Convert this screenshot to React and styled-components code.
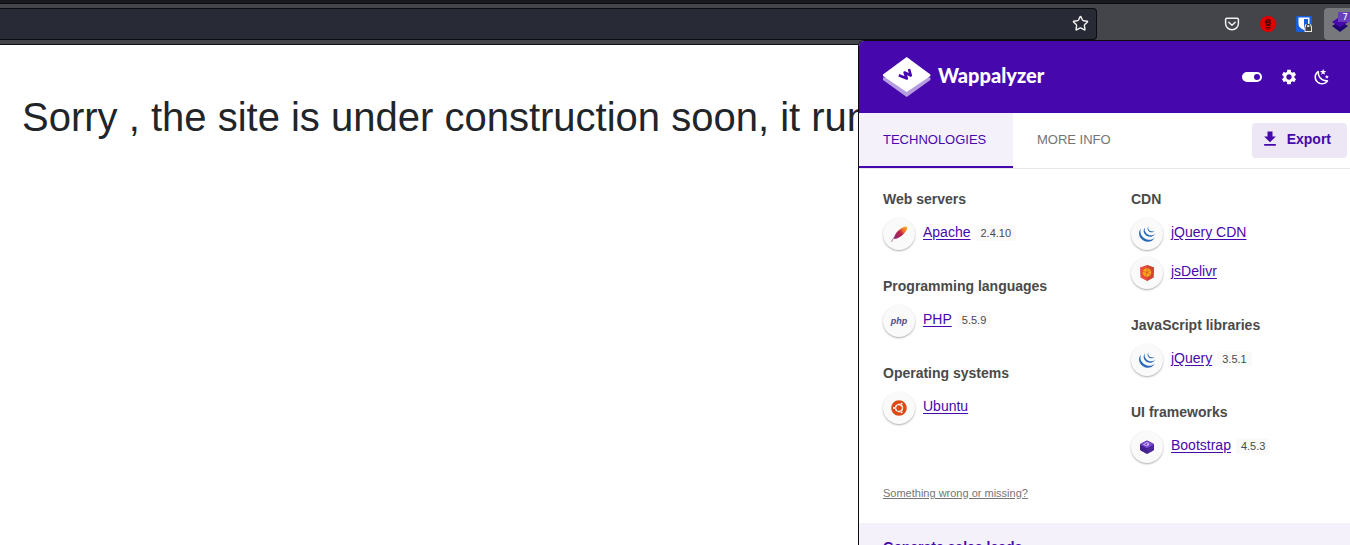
import React from 'react';
import styled, { createGlobalStyle } from 'styled-components';
import { Star } from 'lucide-react';
import { MdSettings } from 'react-icons/md';
import { FaUbuntu } from 'react-icons/fa';
import { SiJquery } from 'react-icons/si';

const purple = '#4608ad';

const GlobalStyle = createGlobalStyle`
  *, *::before, *::after { box-sizing: border-box; }
  body {
    margin: 0;
    background: #fff;
    color: #212529;
    font-family: "Liberation Sans", Arial, sans-serif;
  }
  button { font-family: inherit; cursor: pointer; }
`;

const Screen = styled.div`
  position: relative;
  height: 100vh;
  overflow: hidden;
`;

const TabStrip = styled.div`
  height: 4px;
  background: #18191e;
  border-bottom: 1px solid #0c0c10;
`;

const Toolbar = styled.header`
  display: flex;
  align-items: center;
  height: 41px;
  padding-bottom: 1px;
  background: #43454a;
  border-bottom: 1px solid #111217;
`;

const AddressBar = styled.div`
  flex: 1;
  display: flex;
  align-items: center;
  height: 32px;
  background: #282a36;
  border: 1px solid #0c0c10;
  border-left: 0;
  border-radius: 0 4px 4px 0;
`;

const AddressInput = styled.input`
  flex: 1;
  min-width: 0;
  height: 30px;
  padding: 0 8px;
  border: 0;
  outline: 0;
  background: transparent;
  color: #f8f8f2;
`;

const BarButton = styled.button`
  display: flex;
  flex: none;
  align-items: center;
  justify-content: center;
  width: ${(p) => (p.$wide ? '36px' : '32px')};
  height: 32px;
  padding: 0;
  border: 0;
  background: transparent;
  color: #f0f0f0;
`;

const Extensions = styled.div`
  display: flex;
  width: 253px;
  padding-left: 117px;
  overflow: hidden;
`;

const ActiveExtension = styled(BarButton)`
  position: relative;
  margin-left: 2px;
  border-radius: 4px;
  background: #77787c;
`;

const Badge = styled.span`
  position: absolute;
  top: 4px;
  left: 14px;
  width: 14px;
  height: 10px;
  background: #6a3fbf;
  color: #fff;
  font: 9px/10px "DejaVu Sans", sans-serif;
`;

const Page = styled.main`
  padding: 48px 22px;
`;

const Headline = styled.h1`
  margin: 0;
  font-size: 40px;
  line-height: 48px;
  font-weight: 400;
  white-space: nowrap;
`;

const Popup = styled.section`
  position: absolute;
  top: 40px;
  right: 0;
  width: 492px;
  border: 1px solid #0c0c10;
  border-right: 0;
  border-radius: 6px 0 0 0;
  overflow: hidden;
  background: #fff;
  color: #4a4a4a;
`;

const PopupHeader = styled.div`
  display: flex;
  align-items: center;
  justify-content: space-between;
  height: 72px;
  padding: 0 16px 0 24px;
  background: ${purple};
  color: #fff;
`;

const Brand = styled.a`
  display: flex;
  align-items: center;
  gap: 7px;
  color: inherit;
  text-decoration: none;
  font: 900 20px/24px Lato, sans-serif;

  span { padding-bottom: 4px; }
`;

const HeaderActions = styled.div`
  display: flex;
  align-items: center;
  gap: 9px;
`;

const HeaderButton = styled.button`
  display: flex;
  align-items: center;
  justify-content: center;
  width: ${(p) => (p.$wide ? '32px' : '24px')};
  height: 24px;
  padding: 0;
  border: 0;
  background: transparent;
  color: #fff;
`;

const Tabs = styled.nav`
  display: flex;
  height: 56px;
  border-bottom: 1px solid #e8e8e8;
`;

const Tab = styled.button`
  padding: 0 24px;
  border: 0;
  border-bottom: 2px solid ${(p) => (p.$active ? purple : 'transparent')};
  background: ${(p) => (p.$active ? '#f4f1fb' : 'transparent')};
  color: ${(p) => (p.$active ? purple : '#757575')};
  font-size: 13px;
  line-height: 20px;
  min-width: ${(p) => (p.$active ? '154px' : '0')};
  text-align: left;
`;

const ExportButton = styled.button`
  display: flex;
  align-items: center;
  gap: 7px;
  height: 35px;
  margin: 10px 3px 0 auto;
  padding: 0 16px 4px 8px;
  border: 0;
  border-radius: 4px;
  background: #ece6f5;
  color: ${purple};
  font-size: 14px;
  font-weight: 700;
`;

const Columns = styled.div`
  display: grid;
  grid-template-columns: 248px 1fr;
  padding: 20px 0 0 24px;
`;

const Group = styled.section`
  margin-bottom: 26px;
`;

const GroupTitle = styled.h2`
  margin: 0 0 9px;
  font-size: 14px;
  line-height: 20px;
`;

const Items = styled.ul`
  display: grid;
  gap: 7px;
  margin: 0;
  padding: 0;
  list-style: none;
`;

const Item = styled.li`
  display: flex;
  height: 32px;
`;

const Avatar = styled.span`
  display: flex;
  flex: none;
  align-items: center;
  justify-content: center;
  width: 32px;
  height: 32px;
  margin-right: 8px;
  border-radius: 50%;
  background: #fafafa;
  box-shadow: 0 1px 2px rgba(0, 0, 0, 0.32);
`;

const TechLink = styled.a`
  color: ${purple};
  font-size: 14px;
  line-height: 28px;
  text-underline-offset: 2px;
`;

const Version = styled.span`
  align-self: flex-start;
  margin: 7px 0 0 5px;
  padding: 0 5px;
  border-radius: 3px;
  background: #fafafa;
  color: #4a4a4a;
  font-size: 11px;
  line-height: 16px;
`;

const PhpMark = styled.span`
  color: #484c89;
  font-size: 9px;
  font-style: italic;
  font-weight: 700;
`;

const Feedback = styled.a`
  display: block;
  width: max-content;
  margin: -4px 0 22px 24px;
  color: #757575;
  font-size: 11px;
  line-height: 16px;
`;

const Promo = styled.div`
  min-height: 72px;
  padding: 14px 24px;
  background: #f4f1fb;
  color: ${purple};
  font-size: 14px;
  line-height: 20px;
  font-weight: 700;
`;

const PocketIcon = () => (
  <svg width="16" height="16" viewBox="0 0 16 16" fill="none" stroke="currentColor" strokeWidth="1.5" strokeLinecap="round" strokeLinejoin="round">
    <path d="M2.8 2.2h10.400a1.2 1.2 0 0 1 1.2 1.2V7.500a6.400 6.2 0 0 1-12.800 0V3.4a1.2 1.2 0 0 1 1.2-1.2z" />
    <path d="M4.8 6.3L8 9.3l3.2-3" />
  </svg>
);

const RedIcon = () => (
  <svg width="16" height="16" viewBox="0 0 16 16">
    <circle cx="8" cy="8" r="8" fill="#e00000" />
    <path d="M5 5l2-1.700h3l1 1.500-1 1.200 1.500 1L10 8.500l.8 1.500H6.500L5 9l2-.8L4.800 7z" fill="#500000" />
    <path d="M5 11.500h6M6 13h4" stroke="#700000" strokeWidth="1" />
    <path d="M7 5h2M7 7.500h2.500" stroke="#e00000" strokeWidth=".8" />
  </svg>
);

const ShieldIcon = () => (
  <svg width="16" height="16" viewBox="0 0 16 16">
    <rect width="16" height="16" rx="1" fill="#175ddc" />
    <path d="M2.500 1.500h11V8c0 3-3 5-5.500 6-2.500-1-5.500-3-5.500-6z" fill="#fff" />
    <path d="M8 3h4v5c0 2-2 3.500-4 4.500z" fill="#175ddc" />
    <path d="M8.500 16v-5.500l1-2.500h5l1.500 2.500V16z" fill="#e8e8e8" />
    <path d="M10.500 11.500V10a1.700 1.700 0 0 1 3.400 0v1.500" fill="none" stroke="#444" strokeWidth="1.200" />
    <rect x="9.500" y="11" width="5.500" height="4" fill="#444" />
  </svg>
);

const LayersIcon = () => (
  <svg width="16" height="16" viewBox="0 0 16 16">
    <path d="M0 10l8-5 8 5-8 6z" fill="#1e0670" />
    <path d="M0 6l8-5.500L16 6l-8 5.500z" fill="#4608ad" />
  </svg>
);

const LogoIcon = () => (
  <svg width="48" height="40" viewBox="0 0 48 40">
    <path d="M0 20.500h47.400v2.500L23.700 40 0 23z" fill="#b59ddf" />
    <path d="M0 17.500L23.700 0l23.700 17.500v1.500L23.700 35 0 19z" fill="#fff" />
    <path d="M15.800 18.200l8 3.300-2.200-6 6.200 3-1.800-6.500" fill="none" stroke={purple} strokeWidth="2.600" strokeLinejoin="round" />
  </svg>
);

const ToggleIcon = () => (
  <svg width="24" height="24" viewBox="0 0 24 24" fill="currentColor">
    <path d="M17 7H7a5 5 0 0 0 0 10h10a5 5 0 0 0 0-10m0 8a3 3 0 1 1 0-6 3 3 0 0 1 0 6" />
  </svg>
);

const NightIcon = () => (
  <svg width="18" height="18" viewBox="0 0 24 24" fill="currentColor">
    <path d="M17.75,4.09L15.22,6.03L16.13,9.09L13.5,7.28L10.87,9.09L11.78,6.03L9.25,4.09L12.44,4L13.5,1L14.56,4L17.75,4.09M21.25,11L19.61,12.25L20.2,14.23L18.5,13.06L16.8,14.23L17.39,12.25L15.75,11L17.81,10.95L18.5,9L19.19,10.95L21.25,11M18.97,15.95C19.8,15.87 20.69,17.05 20.16,17.8C19.84,18.25 19.5,18.67 19.08,19.07C15.17,23 8.84,23 4.94,19.07C1.03,15.17 1.03,8.83 4.94,4.93C5.34,4.53 5.76,4.17 6.21,3.85C6.96,3.32 8.14,4.21 8.06,5.04C7.79,7.9 8.75,10.87 10.95,13.06C13.14,15.26 16.1,16.22 18.97,15.95M17.33,17.97C14.5,17.81 11.7,16.64 9.53,14.5C7.36,12.31 6.2,9.5 6.04,6.68C3.23,9.82 3.34,14.64 6.35,17.66C9.37,20.67 14.19,20.78 17.33,17.97Z" />
  </svg>
);

const DownloadIcon = () => (
  <svg width="20" height="20" viewBox="0 0 24 24" fill="currentColor">
    <path d="M5 20h14v-2H5zM19 9h-4V3H9v6H5l7 7z" />
  </svg>
);

const FeatherIcon = () => (
  <svg width="16" height="16" viewBox="0 0 16 16">
    <defs>
      <linearGradient id="feather" x1="1" y1="0" x2="0" y2="1">
        <stop offset="0" stopColor="#f9b11b" />
        <stop offset=".35" stopColor="#ee6a30" />
        <stop offset=".5" stopColor="#c5203f" />
        <stop offset="1" stopColor="#7e2a82" />
      </linearGradient>
    </defs>
    <path d="M15.500.500c1 1.500.500 3-.500 4.500-2 3-5 6-9 7.500L3 13c0-3 2-6.500 5-9C10.500 2 13 .500 15.500.500z" fill="url(#feather)" />
    <path d="M.500 15.800C2 12 6 7.500 11.500 4" fill="none" stroke="#93365f" strokeWidth=".7" />
  </svg>
);

const DelivrIcon = () => (
  <svg width="16" height="16" viewBox="0 0 16 16">
    <path d="M8 0l7 2.500-.5 10L8 16l-6.500-3.500-.5-10z" fill="#e84d3d" />
    <path d="M8 0l7 2.500-.5 10L8 16z" fill="#cf4433" />
    <circle cx="8" cy="7.500" r="4.300" fill="#f7a81b" />
    <path d="M4 6.500l4 1 3.500-2M8 3.500v4l-1.500 4M8 7.500l3.500 2" fill="none" stroke="#d6542a" strokeWidth=".7" />
  </svg>
);

const BootstrapIcon = () => (
  <svg width="16" height="16" viewBox="0 0 16 16" strokeLinejoin="round">
    <path d="M8 2l6.500 3.300v5.700L8 14.500 1.500 11V5.300z" fill="#43208f" stroke="#43208f" />
    <path d="M8 8.500l6.500-3.200v5.700L8 14.500z" fill="#4c279c" />
    <path d="M8 2l6.500 3.300L8 8.700 1.500 5.300z" fill="#7a45cf" stroke="#7a45cf" />
    <path d="M4.500 5.500l3.500-2 1.700.8-1.700 1 2.200.2-2.200 1.500z" fill="none" stroke="#d8c8f5" strokeWidth=".8" />
  </svg>
);

const jquery = <SiJquery size={16} color="#2a69b8" />;

const columns = [
  [
    { title: 'Web servers', items: [{ name: 'Apache', version: '2.4.10', icon: <FeatherIcon /> }] },
    { title: 'Programming languages', items: [{ name: 'PHP', version: '5.5.9', icon: <PhpMark>php</PhpMark> }] },
    { title: 'Operating systems', items: [{ name: 'Ubuntu', icon: <FaUbuntu size={16} color="#dd4814" /> }] },
  ],
  [
    { title: 'CDN', items: [{ name: 'jQuery CDN', icon: jquery }, { name: 'jsDelivr', icon: <DelivrIcon /> }] },
    { title: 'JavaScript libraries', items: [{ name: 'jQuery', version: '3.5.1', icon: jquery }] },
    { title: 'UI frameworks', items: [{ name: 'Bootstrap', version: '4.5.3', icon: <BootstrapIcon /> }] },
  ],
];

export default function App() {
  return (
    <>
      <GlobalStyle />
      <Screen>
        <TabStrip />
        <Toolbar>
          <AddressBar>
            <AddressInput type="text" aria-label="Address" />
            <BarButton aria-label="Bookmark this page"><Star size={17} strokeWidth={2} /></BarButton>
          </AddressBar>
          <Extensions>
            <BarButton $wide aria-label="Pocket"><PocketIcon /></BarButton>
            <BarButton $wide aria-label="Extension"><RedIcon /></BarButton>
            <BarButton $wide aria-label="Bitwarden"><ShieldIcon /></BarButton>
            <ActiveExtension aria-label="Wappalyzer">
              <LayersIcon />
              <Badge>7</Badge>
            </ActiveExtension>
          </Extensions>
        </Toolbar>
        <Page>
          <Headline>Sorry , the site is under construction soon, it run</Headline>
        </Page>
        <Popup>
          <PopupHeader>
            <Brand href="#"><LogoIcon /><span>Wappalyzer</span></Brand>
            <HeaderActions>
              <HeaderButton $wide aria-label="Toggle"><ToggleIcon /></HeaderButton>
              <HeaderButton aria-label="Settings"><MdSettings size={18} /></HeaderButton>
              <HeaderButton aria-label="Dark mode"><NightIcon /></HeaderButton>
            </HeaderActions>
          </PopupHeader>
          <Tabs>
            <Tab $active>TECHNOLOGIES</Tab>
            <Tab>MORE INFO</Tab>
            <ExportButton><DownloadIcon />Export</ExportButton>
          </Tabs>
          <Columns>
            {columns.map((groups, i) => (
              <div key={i}>
                {groups.map((group) => (
                  <Group key={group.title}>
                    <GroupTitle>{group.title}</GroupTitle>
                    <Items>
                      {group.items.map((item) => (
                        <Item key={item.name}>
                          <Avatar>{item.icon}</Avatar>
                          <TechLink href="#">{item.name}</TechLink>
                          {item.version && <Version>{item.version}</Version>}
                        </Item>
                      ))}
                    </Items>
                  </Group>
                ))}
              </div>
            ))}
          </Columns>
          <Feedback href="#">Something wrong or missing?</Feedback>
          <Promo>Generate sales leads</Promo>
        </Popup>
      </Screen>
    </>
  );
}
